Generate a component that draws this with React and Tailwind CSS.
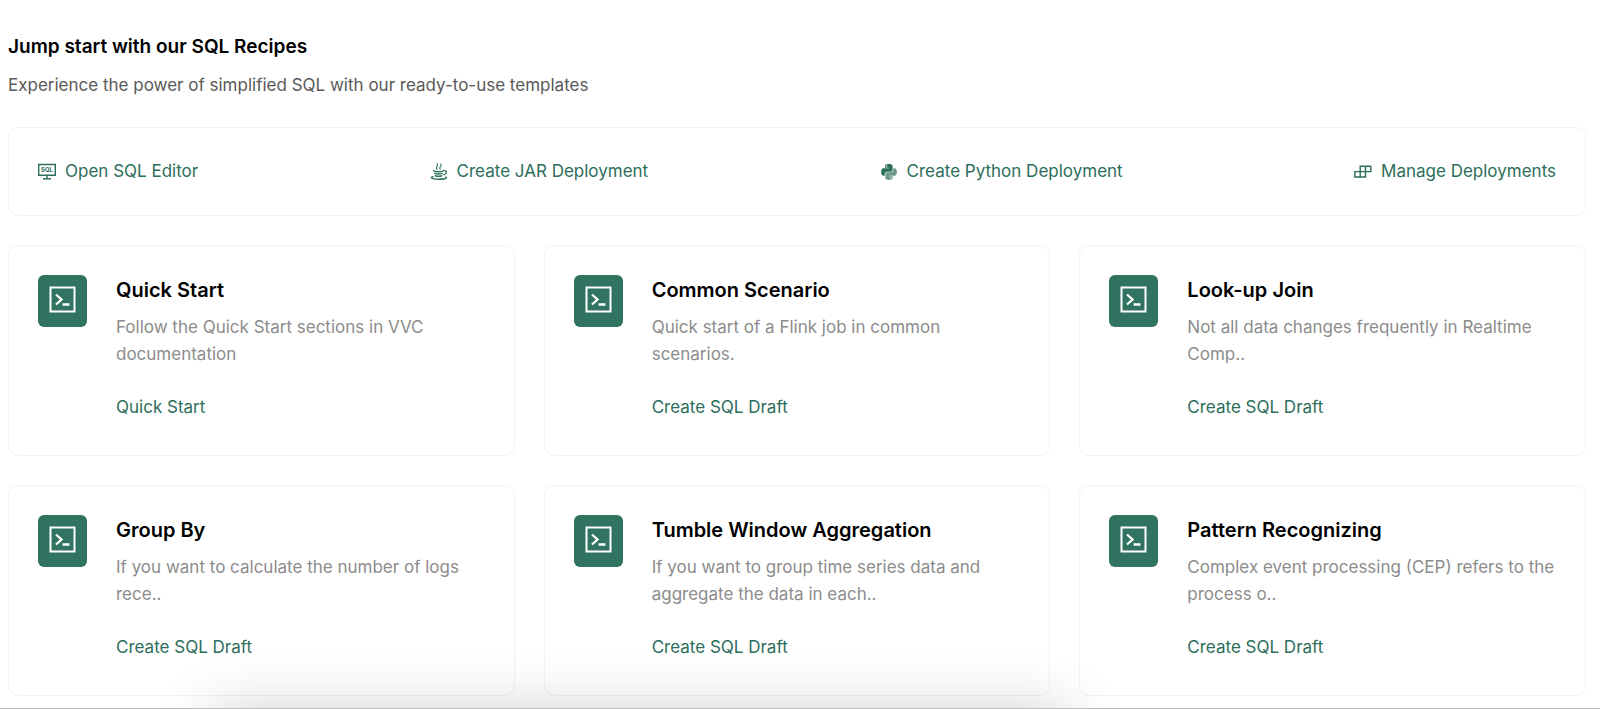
import React from 'react';

const recipes = [
  { title: 'Quick Start', description: 'Follow the Quick Start sections in VVC documentation', action: 'Quick Start' },
  { title: 'Common Scenario', description: 'Quick start of a Flink job in common scenarios.', action: 'Create SQL Draft' },
  { title: 'Look-up Join', description: 'Not all data changes frequently in Realtime Comp..', action: 'Create SQL Draft' },
  { title: 'Group By', description: 'If you want to calculate the number of logs rece..', action: 'Create SQL Draft' },
  { title: 'Tumble Window Aggregation', description: 'If you want to group time series data and aggregate the data in each..', action: 'Create SQL Draft' },
  { title: 'Pattern Recognizing', description: 'Complex event processing (CEP) refers to the process o..', action: 'Create SQL Draft' }
];

function SqlIcon() {
  return (
    <svg width="18" height="18" viewBox="0 0 18 18" fill="none" stroke="currentColor" aria-hidden="true">
      <path d="M0.7 1.5h16.6v10.8H0.7z" strokeWidth="1.4" />
      <path d="M9 12.3v3.2M5 15.8h8" strokeWidth="1.4" />
      <text x="9" y="9.3" textAnchor="middle" fontSize="6" fontWeight="700" fontFamily="Inter, sans-serif" fill="currentColor" stroke="none">
        SQL
      </text>
    </svg>
  );
}

function PythonIcon() {
  return (
    <svg width="18" height="18" viewBox="0 0 448 512" fill="currentColor" aria-hidden="true">
      <path d="M167.8 248.1h106.8c29.7 0 53.4-24.5 53.4-54.3V91.9c0-29-24.4-50.7-53.4-55.6-35.8-5.9-74.700-5.600-106.800.1-45.200 8-53.400 24.700-53.400 55.600v40.700h106.900v13.600h-147c-31.100 0-58.300 18.700-66.800 54.200-9.800 40.700-10.200 66.100 0 108.600 7.600 31.600 25.700 54.200 56.800 54.200H101v-48.800c0-35.300 30.500-66.400 66.800-66.400zm-6.700-142.600c-11.100 0-20.100-9.100-20.100-20.300.1-11.300 9-20.400 20.100-20.400 11 0 20.100 9.200 20.100 20.400s-9 20.300-20.100 20.300z" />
      <path opacity="0.7" d="M439.8 200.500c-7.700-30.900-22.300-54.200-53.400-54.200h-40.100v47.400c0 36.800-31.200 67.800-66.800 67.800H172.700c-29.200 0-53.400 25-53.400 54.300v101.800c0 29 25.200 46 53.400 54.300 33.800 9.900 66.300 11.700 106.800 0 26.900-7.800 53.400-23.500 53.400-54.300v-40.700H226.200v-13.600h160.200c31.100 0 42.600-21.700 53.400-54.200 11.200-33.500 10.700-65.700 0-108.600zM286.200 404c11.100 0 20.100 9.100 20.100 20.300 0 11.300-9 20.400-20.100 20.400-11 0-20.100-9.200-20.100-20.400.1-11.300 9.100-20.300 20.100-20.300z" />
    </svg>
  );
}

function JavaIcon() {
  return (
    <svg width="18" height="18" viewBox="0 0 18 18" fill="none" stroke="currentColor" strokeLinecap="round" aria-hidden="true">
      <path d="M7 6.200C5.200 4.300 8.600 3 7.200.7M10.200 6.200C8.400 4.500 12.200 3.200 10.900.9" strokeWidth="1.1" />
      <path d="M3.500 7.900c2.500.9 7.500.9 9.800 0M4.700 10.400c2 .7 5.500.7 7.500 0M5.200 12.700c1.800.6 4.800.6 6.500 0" strokeWidth="1.5" />
      <path d="M14.300 7.600c3.200-.2 2.800 3-.5 4.200" strokeWidth="1.3" />
      <path d="M3 13.600c-5 1.600 2.500 2.700 6 2.700s9.500-.6 6.700-2.300" strokeWidth="1.4" />
    </svg>
  );
}

function DeploymentsIcon() {
  return (
    <svg width="18" height="18" viewBox="0 0 18 18" fill="none" stroke="currentColor" strokeWidth="1.4" aria-hidden="true">
      <path d="M6.200 3.200h10.600v5.400H6.200zM.9 8.600h10.600V14H.9z" />
      <path d="M11.500 3.200v5.400M6.200 8.600V14" />
    </svg>
  );
}

const shortcuts = [
  { label: 'Open SQL Editor', icon: SqlIcon },
  { label: 'Create JAR Deployment', icon: JavaIcon },
  { label: 'Create Python Deployment', icon: PythonIcon },
  { label: 'Manage Deployments', icon: DeploymentsIcon }
];

function RecipeCard({ recipe }) {
  return (
    <article className="flex items-start gap-[29px] rounded-[10px] border border-[#f3f3f3] px-[29px] pt-[29px] pb-[34px]">
      <div className="flex h-[52px] w-[49px] shrink-0 items-center justify-center rounded-md bg-[#317361] pb-1">
        <svg width="27" height="27" viewBox="0 0 27 27" fill="none" stroke="white" strokeWidth="2" aria-hidden="true">
          <path d="M1.500 1.500h24v24h-24z" />
          <path d="M7 8.500l5.500 5L7 18.500M13.500 18.500h7" strokeWidth="2.3" />
        </svg>
      </div>
      <div className="min-w-0">
        <h3 className="text-xl leading-[30px] font-semibold text-black">{recipe.title}</h3>
        <p className="mt-[9px] text-[17px] leading-[27px] text-[#8c8c8c]">{recipe.description}</p>
        <button type="button" className="mt-[26px] text-[17px] leading-[27px] text-[#2c6e5b]">
          {recipe.action}
        </button>
      </div>
    </article>
  );
}

export default function App() {
  return (
    <div className="relative min-h-screen overflow-hidden bg-white pt-8 pr-[14px] pb-[13px] pl-2 font-['Inter',sans-serif]">
      {/* Header */}
      <h2 className="text-[19px] leading-[30px] font-semibold text-black">Jump start with our SQL Recipes</h2>
      <p className="mt-[10px] text-[17px] leading-[27px] text-[#595959]">
        Experience the power of simplified SQL with our ready-to-use templates
      </p>

      {/* Shortcuts */}
      <nav className="mt-7 flex items-center justify-between rounded-[10px] border border-[#f3f3f3] px-[29px] py-[30px]">
        {shortcuts.map(({ label, icon: Icon }) => (
          <button key={label} type="button" className="flex items-center gap-[9px] text-[17px] leading-[27px] text-[#2c6e5b]">
            <Icon />
            {label}
          </button>
        ))}
      </nav>

      {/* Recipe cards */}
      <div className="mt-[29px] grid grid-cols-3 gap-[29px]">
        {recipes.map((recipe) => (
          <RecipeCard key={recipe.title} recipe={recipe} />
        ))}
      </div>

      {/* Shadow cast by the panel below the fold */}
      <div className="pointer-events-none absolute top-full right-[530px] left-[210px] h-20 shadow-[0_0_60px_rgba(0,0,0,0.18)]"></div>
      <div className="absolute inset-x-0 bottom-0 h-px bg-[#bdbdbd]"></div>
    </div>
  );
}
